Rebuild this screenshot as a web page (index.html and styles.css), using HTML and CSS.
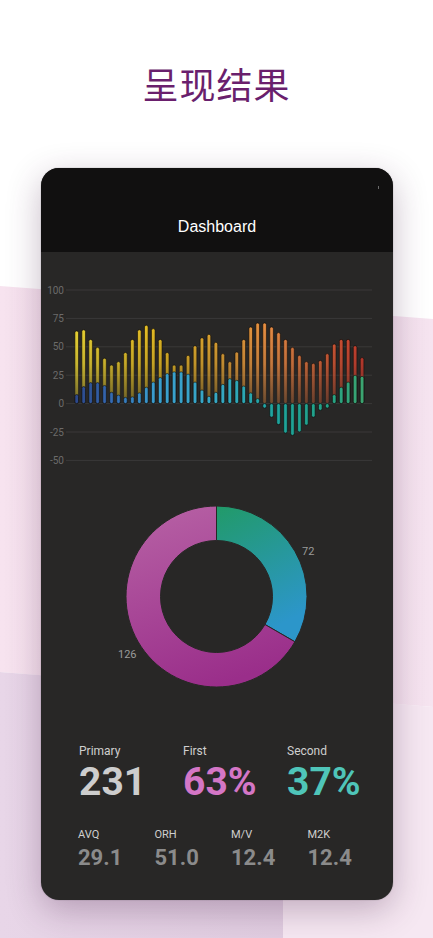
FILE: index.html
```html
<!DOCTYPE html>
<html lang="zh-CN">
<head>
  <meta charset="UTF-8" />
  <meta name="viewport" content="width=device-width, initial-scale=1.0" />
  <title>呈现结果</title>
  <link rel="stylesheet" href="styles.css">
</head>
<body>
  <div class="backdrop">
    <div class="bg-band"></div>
    <div class="bg-low-left"></div>
    <div class="bg-low-right"></div>
  </div>

  <h1 class="headline">呈现结果</h1>

  <div class="phone">
    <div class="phone-header">
      <span class="cam-dot"></span>
      <span class="phone-title">Dashboard</span>
    </div>

    <div class="phone-body">
      <svg id="barChart" class="bar-chart" width="352" height="230" viewBox="0 0 352 230">
        <defs>
          <linearGradient id="warm" gradientUnits="userSpaceOnUse" x1="34" y1="0" x2="322" y2="0">
            <stop offset="0" stop-color="#ecd634" />
            <stop offset="0.3" stop-color="#e6ba22" />
            <stop offset="0.5" stop-color="#e0a232" />
            <stop offset="0.68" stop-color="#e88c44" />
            <stop offset="0.82" stop-color="#dc6c3a" />
            <stop offset="1" stop-color="#cc3a2c" />
          </linearGradient>
          <linearGradient id="cool" gradientUnits="userSpaceOnUse" x1="34" y1="0" x2="322" y2="0">
            <stop offset="0" stop-color="#2c4688" />
            <stop offset="0.12" stop-color="#3568b0" />
            <stop offset="0.28" stop-color="#3a9ecf" />
            <stop offset="0.5" stop-color="#36a8c4" />
            <stop offset="0.7" stop-color="#1ea39c" />
            <stop offset="0.88" stop-color="#24a286" />
            <stop offset="1" stop-color="#3ca470" />
          </linearGradient>
          <linearGradient id="fadeGrad" gradientUnits="userSpaceOnUse" x1="0" y1="72" x2="0" y2="152">
            <stop offset="0" stop-color="#ffffff" />
            <stop offset="0.5" stop-color="#d0d0d0" />
            <stop offset="1" stop-color="#585858" />
          </linearGradient>
          <mask id="fade" maskUnits="userSpaceOnUse" x="0" y="0" width="352" height="230">
            <rect x="0" y="0" width="352" height="230" fill="url(#fadeGrad)" />
          </mask>
        </defs>
        <g class="grid" id="grid"></g>
        <g id="warmBars" class="bars" fill="url(#warm)" mask="url(#fade)"></g>
        <g id="coolBars" class="bars" fill="url(#cool)"></g>
      </svg>

      <svg class="donut" width="352" height="240" viewBox="0 0 352 240">
        <defs>
          <linearGradient id="seaGrad" x1="0" y1="0" x2="0.35" y2="1">
            <stop offset="0" stop-color="#219a68" />
            <stop offset="1" stop-color="#2c96ca" />
          </linearGradient>
          <linearGradient id="plumGrad" x1="0.2" y1="0" x2="0.5" y2="1">
            <stop offset="0" stop-color="#b660a4" />
            <stop offset="1" stop-color="#9a2e8a" />
          </linearGradient>
        </defs>
        <path fill="url(#seaGrad)" stroke="#282726" stroke-width="1"
              d="M175.5 24 A90.5 90.5 0 0 1 253.88 159.75 L224 142.5 A56 56 0 0 0 175.5 58.5 Z" />
        <path fill="url(#plumGrad)" stroke="#282726" stroke-width="1"
              d="M253.88 159.75 A90.5 90.5 0 1 1 175.5 24 L175.5 58.5 A56 56 0 1 0 224 142.5 Z" />
        <text class="slice-label" x="261" y="73">72</text>
        <text class="slice-label" x="77" y="176">126</text>
      </svg>

      <div class="stats">
        <div class="stat-row big">
          <div class="stat">
            <div class="stat-label">Primary</div>
            <div class="stat-value">231</div>
          </div>
          <div class="stat">
            <div class="stat-label">First</div>
            <div class="stat-value pink">63%</div>
          </div>
          <div class="stat">
            <div class="stat-label">Second</div>
            <div class="stat-value teal">37%</div>
          </div>
        </div>
        <div class="stat-row small">
          <div class="stat">
            <div class="stat-label">AVQ</div>
            <div class="stat-value">29.1</div>
          </div>
          <div class="stat">
            <div class="stat-label">ORH</div>
            <div class="stat-value">51.0</div>
          </div>
          <div class="stat">
            <div class="stat-label">M/V</div>
            <div class="stat-value">12.4</div>
          </div>
          <div class="stat">
            <div class="stat-label">M2K</div>
            <div class="stat-value">12.4</div>
          </div>
        </div>
      </div>
    </div>
  </div>

  <script>
    const first = [64, 65, 56.5, 49.5, 40, 34, 37, 45, 56.5, 65, 69, 66, 56.5, 45, 34, 34, 42.5, 51, 58, 61,
      54, 44, 37, 45.5, 56.5, 67.5, 71, 71, 67.5, 62.5, 56.5, 49.5, 42.5, 37, 35.5, 38, 44, 52.5, 56.5, 56.5, 51, 40.5];
    const second = [8, 15, 18.5, 18.5, 16, 10, 7.5, 5.5, 6, 9.5, 14.5, 19, 23, 26.5, 28, 28, 26, 19, 12, 6.5,
      10, 17, 22, 20.5, 15.5, 9.5, 4.5, -4, -12, -18.5, -26, -28, -25, -19, -12, -6, -4, 8, 14.5, 19, 25, 24];

    const NS = "http://www.w3.org/2000/svg";
    const zeroY = 151.6;
    const unit = 1.136; // px per value
    const barW = 3.6;

    function el(name, attrs) {
      const node = document.createElementNS(NS, name);
      for (const k in attrs) node.setAttribute(k, attrs[k]);
      return node;
    }

    // grid lines + axis labels
    const grid = document.getElementById("grid");
    [100, 75, 50, 25, 0, -25, -50].forEach(v => {
      const y = zeroY - v * unit;
      grid.appendChild(el("line", { x1: 25, x2: 331, y1: y, y2: y, class: "grid-line" }));
      const t = el("text", { x: 23, y: y + 3.5, class: "axis-label" });
      t.textContent = v;
      grid.appendChild(t);
    });

    function addBars(groupId, values) {
      const g = document.getElementById(groupId);
      values.forEach((v, i) => {
        const x = 33.9 + i * 6.96;
        const h = Math.abs(v) * unit;
        const y = v >= 0 ? zeroY - h : zeroY;
        g.appendChild(el("rect", { x: x, y: y, width: barW, height: h, rx: 1.8 }));
      });
    }

    addBars("warmBars", first);
    addBars("coolBars", second);
  </script>
</body>
</html>
```

FILE: styles.css
```css
html, body {
  margin: 0;
  padding: 0;
}
body {
  position: relative;
  width: 433px;
  height: 938px;
  overflow: hidden;
  background: #ffffff;
  font-family: Roboto, 'Liberation Sans', sans-serif;
}

/* decorative background planes */
.backdrop {
  position: absolute;
  inset: 0;
  z-index: 0;
}
.backdrop div {
  position: absolute;
  inset: 0;
}
.bg-band {
  background: linear-gradient(to right, #f7e3ef, #f3dfec 50%, #f6e4f0);
  clip-path: polygon(0 286px, 433px 319px, 433px 707px, 0 672px);
}
.bg-low-left {
  background: linear-gradient(to right, #e8d6e8, #ddc9dd);
  clip-path: polygon(0 672px, 283px 694px, 283px 938px, 0 938px);
}
.bg-low-right {
  background: #f6e8f2;
  clip-path: polygon(283px 694px, 433px 707px, 433px 938px, 283px 938px);
}

.headline {
  position: relative;
  z-index: 1;
  margin: 0;
  padding-top: 62px;
  text-align: center;
  font-family: 'Noto Sans CJK SC', sans-serif;
  font-weight: 400;
  font-size: 36px;
  line-height: 43px;
  letter-spacing: 1px;
  color: #6a1f6d;
}

.phone {
  position: relative;
  z-index: 1;
  width: 352px;
  height: 732px;
  margin: 63px 0 0 41px;
  border-radius: 18px;
  overflow: hidden;
  background: #282726;
  box-shadow: 0 0 0 1px rgba(0, 0, 0, 0.06), 0 10px 34px rgba(70, 30, 70, 0.3);
}

.phone-header {
  position: relative;
  height: 84px;
  box-sizing: border-box;
  padding-top: 49px;
  background: #111010;
  text-align: center;
}
.phone-title {
  font-family: 'Liberation Sans', Arial, sans-serif;
  font-size: 16px;
  line-height: 20px;
  color: #ffffff;
}
.cam-dot {
  position: absolute;
  top: 18px;
  right: 14px;
  width: 1px;
  height: 3px;
  background: #6a6a6a;
}

.phone-body {
  display: flex;
  flex-direction: column;
}
.bar-chart, .donut {
  display: block;
}
.bars rect {
  stroke: rgba(8, 6, 4, 0.7);
  stroke-width: 0.8;
}
.grid-line {
  stroke: #3a3938;
  stroke-width: 1;
}
.axis-label {
  font-family: Roboto, sans-serif;
  font-size: 10px;
  fill: #6c6b6a;
  text-anchor: end;
}
.slice-label {
  font-family: Roboto, sans-serif;
  font-size: 11px;
  fill: #9a9a9a;
}

.stats {
  padding: 22px 0 0 38px;
}
.stat-row {
  display: flex;
}
.stat-row.big .stat {
  width: 104px;
}
.stat-row.small {
  margin-top: 26px;
  margin-left: -1px;
}
.stat-row.small .stat {
  width: 76.5px;
}
.stat-label {
  font-size: 12px;
  line-height: 14px;
  color: #cfcfcf;
}
.big .stat-value {
  margin-top: 5px;
  font-size: 39px;
  line-height: 39px;
  font-weight: 700;
  color: #cdcdcd;
}
.small .stat-label {
  font-size: 11px;
  line-height: 13px;
}
.small .stat-value {
  margin-top: 6px;
  font-size: 22px;
  line-height: 22px;
  font-weight: 700;
  color: #8b8b8b;
}
.stat-value.pink {
  color: #d476c6;
}
.stat-value.teal {
  color: #4fc5b9;
}
```
